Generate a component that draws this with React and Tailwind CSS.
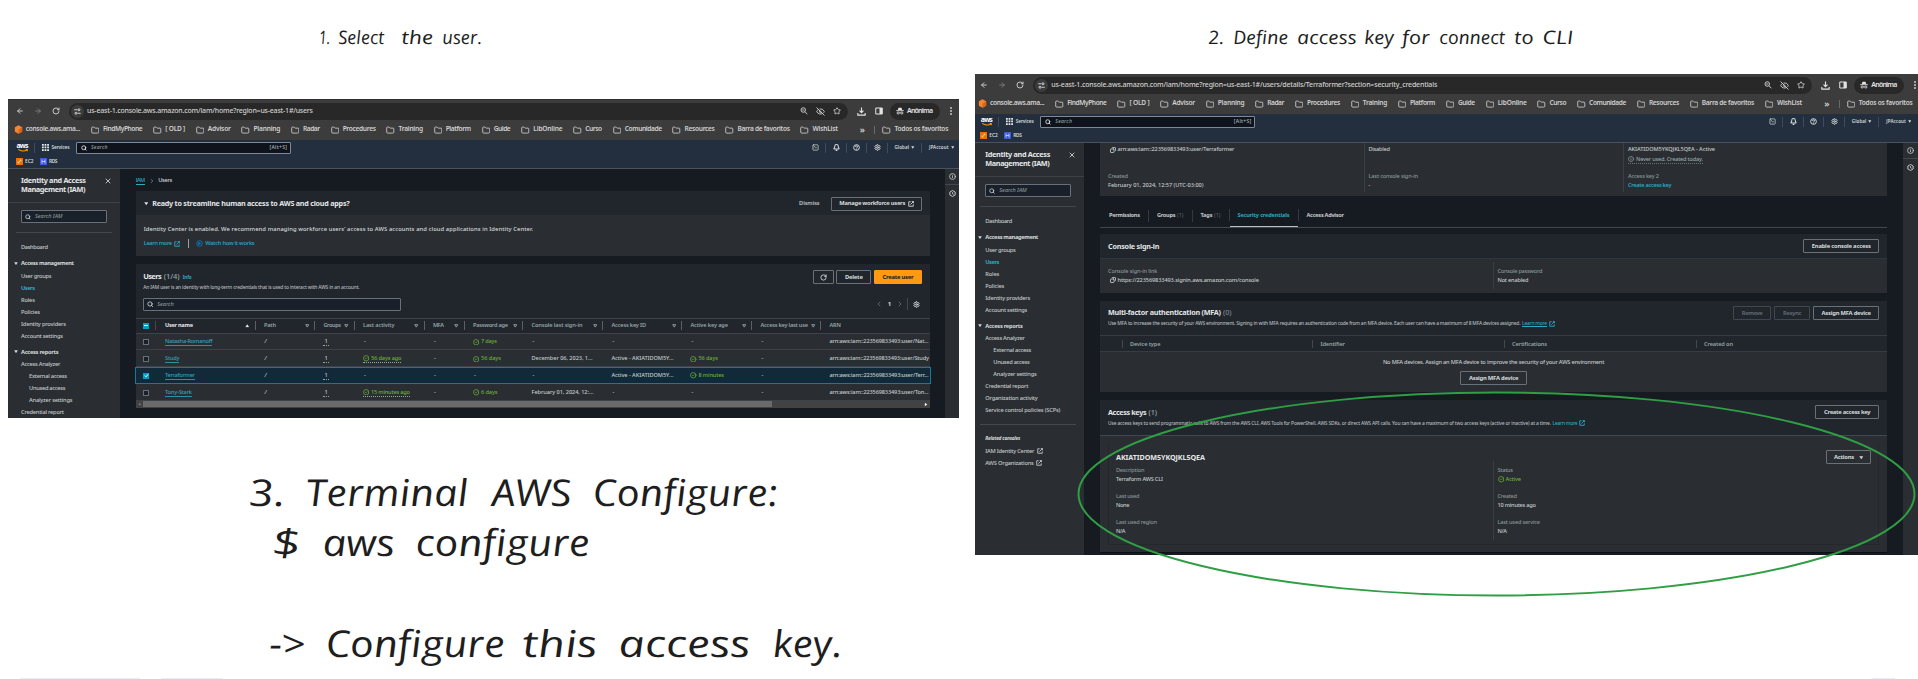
import { useLayoutEffect, useRef } from "react";
import {
  ArrowLeft, ArrowRight, RotateCw, Folder, Search, EyeOff, Star, Bell, Settings,
  Info, CircleCheck, X, Copy, ChevronLeft, ChevronRight, SquareTerminal,
} from "lucide-react";

/* Text run that is tracked so that it fills exactly `w` pixels. */
function T({ w, className = "", children }) {
  const ref = useRef(null);
  useLayoutEffect(() => {
    const el = ref.current;
    el.style.letterSpacing = "0px";
    const natural = el.getBoundingClientRect().width;
    const n = el.textContent.length;
    if (n > 1) el.style.letterSpacing = `${(w - natural) / (n - 1)}px`;
  }, [w, children]);
  return (
    <span className={"inline-block shrink-0 whitespace-pre " + className} style={{ width: w }}>
      <span ref={ref}>{children}</span>
    </span>
  );
}

/* Handwritten word, stretched to `w` pixels and set a little more upright than the italic. */
function Word({ w, gap, children }) {
  const ref = useRef(null);
  useLayoutEffect(() => {
    const el = ref.current;
    el.style.transform = "none";
    const natural = el.offsetWidth;
    el.style.transform = `scaleX(${w / natural}) skewX(6deg)`;
  }, [w, children]);
  return (
    <span className="inline-block shrink-0 whitespace-pre" style={{ width: w, marginLeft: gap }}>
      <span ref={ref} className="inline-block origin-left">{children}</span>
    </span>
  );
}

function Note({ words, className }) {
  return (
    <div className={"absolute flex font-['Virgil','Open_Sans',sans-serif] italic text-[#1e1e1e] " + className}>
      {words.map(([text, w, gap]) => (
        <Word key={text} w={w} gap={gap}>{text}</Word>
      ))}
    </div>
  );
}

function External({ className = "" }) {
  return (
    <svg viewBox="0 0 16 16" className={"shrink-0 " + className} fill="none" stroke="currentColor" strokeWidth="2.400">
      <path d="M7 2H2v12h12V9M10 1.500h4.500V6M14.500 1.500L6.500 9.500" />
    </svg>
  );
}

function Down({ className = "" }) {
  return (
    <svg viewBox="0 0 10 8" className={"shrink-0 " + className}>
      <path d="M0.500 0.500h9L5 7.500z" fill="currentColor" />
    </svg>
  );
}

function Sort() {
  return (
    <svg viewBox="0 0 10 9" className="h-[4px] w-[4.500px] shrink-0">
      <path d="M1.500 1.500h7L5 7z" fill="none" stroke="#95a5a6" strokeWidth="2" />
    </svg>
  );
}

function Incognito() {
  return (
    <svg viewBox="0 0 16 16" className="h-[8px] w-[8px] shrink-0" fill="#e3e3e3">
      <path d="M5 1.500h6l1.400 4.500H3.600z" />
      <path d="M0.500 6.500h15v1.700h-15z" />
      <circle cx="4.300" cy="12" r="2.200" fill="none" stroke="#e3e3e3" strokeWidth="1.600" />
      <circle cx="11.700" cy="12" r="2.200" fill="none" stroke="#e3e3e3" strokeWidth="1.600" />
      <path d="M6.500 11h3v1.400h-3z" />
    </svg>
  );
}

const bookmarks = [
  ["FindMyPhone", 39.8], ["[ OLD ]", 20], ["Advisor", 23], ["Planning", 27], ["Radar", 17],
  ["Procedures", 33.3], ["Training", 24.5], ["Platform", 25.5], ["Guide", 17], ["LibOnline", 29.3],
  ["Curso", 17], ["Comunidade", 37.2], ["Resources", 30.3], ["Barra de favoritos", 52.5], ["WishList", 25.3],
];

function FolderMark() {
  return <Folder className="h-[8.500px] w-[8.500px] shrink-0 text-[#cfcfcf]" strokeWidth={2.4} />;
}

function Chrome({ url, urlWidth }) {
  return (
    <div className="w-[951px] bg-[#3c3c3c] font-semibold text-[#d0d0d0]">
      <div className="flex h-[22px] items-center border-t border-[#303030] pt-[1px]">
        <ArrowLeft className="ml-[8px] h-[8px] w-[8px]" strokeWidth={2.8} />
        <ArrowRight className="ml-[9.500px] h-[8px] w-[8px] text-[#858585]" strokeWidth={2.4} />
        <RotateCw className="ml-[10px] h-[8px] w-[8px]" strokeWidth={2.8} />
        <div className="ml-[9px] flex h-[17px] w-[779px] items-center rounded-full bg-[#282828]">
          <div className="ml-[2.500px] flex h-[13px] w-[13px] items-center justify-center rounded-full bg-[#3c3c3c]">
            <svg viewBox="0 0 12 12" className="h-[7px] w-[7px]" fill="none" stroke="#e3e3e3" strokeWidth="1.500">
              <path d="M0.500 3h5M6.500 9h5" />
              <circle cx="8.500" cy="3" r="1.700" />
              <circle cx="3.500" cy="9" r="1.700" />
            </svg>
          </div>
          <T w={urlWidth} className="ml-[3px] text-[7px] font-medium">{url}</T>
          <div className="ml-auto mr-[7px] flex items-center gap-[8px]">
            <svg viewBox="0 0 16 16" className="h-[8px] w-[8px]" fill="none" stroke="#d6d6d6" strokeWidth="1.800">
              <circle cx="6.500" cy="6" r="4.500" />
              <path d="M10 9.500l4.500 5M4.500 6h4" />
            </svg>
            <EyeOff className="h-[9px] w-[9px]" strokeWidth={2.4} />
            <Star className="h-[8px] w-[8px]" strokeWidth={2.6} />
          </div>
        </div>
        <svg viewBox="0 0 16 16" className="ml-[9px] h-[9px] w-[9px]" fill="none" stroke="#e3e3e3" strokeWidth="2">
          <path d="M8 1v9M4.500 6.500L8 10l3.500-3.500M1.500 10.500v4h13v-4" />
        </svg>
        <svg viewBox="0 0 16 16" className="ml-[9px] h-[8px] w-[8px]">
          <path d="M1.500 2h13v12h-13z" fill="none" stroke="#e3e3e3" strokeWidth="2" />
          <path d="M9 2h5.500v12H9z" fill="#e3e3e3" />
        </svg>
        <div className="ml-[7.500px] flex h-[17px] w-[50px] items-center rounded-full bg-[#282828]">
          <span className="ml-[6px] mr-[3px] flex"><Incognito /></span>
          <T w={26} className="text-[7px] text-[#e3e3e3]">Anônima</T>
        </div>
        <svg viewBox="0 0 4 16" className="ml-[10px] h-[8px] w-[2px]" fill="#d6d6d6">
          <circle cx="2" cy="2" r="1.800" />
          <circle cx="2" cy="8" r="1.800" />
          <circle cx="2" cy="14" r="1.800" />
        </svg>
      </div>
      <div className="flex h-[19px] items-center pb-[1.500px] text-[6.600px] leading-none">
        <svg viewBox="0 0 16 16" className="ml-[6px] h-[9px] w-[9px] shrink-0">
          <path d="M8 0.500l6.500 3.700v7.600L8 15.500l-6.500-3.700V4.200z" fill="#f58536" />
          <path d="M8 8l6.500-3.800v7.600L8 15.500z" fill="#d86613" />
        </svg>
        <T w={54.6} className="ml-[2.700px]">console.aws.ama...</T>
        <div className="ml-[10.500px] flex items-center gap-[10.500px]">
          {bookmarks.map(([name, w]) => (
            <div key={name} className="flex items-center gap-[3.600px]">
              <FolderMark />
              <T w={w}>{name}</T>
            </div>
          ))}
        </div>
        <T w={6} className="ml-[22px] pb-[1.500px] text-[9px]">»</T>
        <div className="ml-[8.500px] h-[8px] w-px bg-[#6a6a6a]" />
        <div className="ml-[7px] flex items-center gap-[3.600px]">
          <FolderMark />
          <T w={54}>Todos os favoritos</T>
        </div>
      </div>
    </div>
  );
}

function Sep() {
  return <div className="h-[10px] w-px shrink-0 bg-[#3f4b5a]" />;
}

function AwsHeader({ className = "" }) {
  return (
    <div className="h-[29px] w-[951px] border-b border-[#4a535c] bg-[#232f3e] text-[#d5dbdb]">
      <div className={"flex h-[15px] items-center " + className}>
        <div className="ml-[8px] flex w-[13px] flex-col items-center">
          <T w={12} className="text-[7px] font-bold leading-[5px] text-white">aws</T>
          <svg viewBox="0 0 24 7" className="mt-[1px] h-[3px] w-[12px]" fill="none" stroke="#ff9900" strokeWidth="2.400">
            <path d="M1 1c6 5 15 5 20 1M18 1h4v4" />
          </svg>
        </div>
        <div className="ml-[5px]"><Sep /></div>
        <svg viewBox="0 0 14 14" className="ml-[7px] h-[7px] w-[7px]" fill="#e9ebed">
          <path d="M0 0h3.500v3.500H0zM5.200 0h3.500v3.500H5.200zM10.400 0h3.500v3.500h-3.500zM0 5.200h3.500v3.500H0zM5.200 5.200h3.500v3.500H5.200zM10.400 5.200h3.500v3.500h-3.500zM0 10.400h3.500v3.500H0zM5.200 10.400h3.500v3.500H5.200zM10.400 10.400h3.500v3.500h-3.500z" />
        </svg>
        <T w={18} className="ml-[2.500px] text-[4.800px] font-semibold">Services</T>
        <div className="ml-[6.500px] flex h-[12px] w-[214.500px] items-center rounded-[1px] border border-[#7d8998] bg-[#0f141c]">
          <Search className="ml-[4px] h-[6px] w-[6px] text-white" strokeWidth={3} />
          <T w={16.5} className="ml-[4px] text-[5px] italic text-[#95a5a6]">Search</T>
          <T w={17.5} className="ml-auto mr-[2.500px] text-[5.200px] text-[#aab7b8]">[Alt+S]</T>
        </div>
        <div className="ml-auto mr-[5px] flex items-center">
          <SquareTerminal className="mr-[6px] h-[7px] w-[7px]" strokeWidth={2.4} />
          <Sep />
          <Bell className="mx-[6.500px] h-[7px] w-[7px]" strokeWidth={3.5} />
          <Sep />
          <svg viewBox="0 0 16 16" className="mx-[6px] h-[7px] w-[7px]" fill="none" stroke="#e9ebed" strokeWidth="2">
            <circle cx="8" cy="8" r="6.500" />
            <path d="M5.500 6.500c0-3 5-3 5 0 0 1.500-2.500 1.500-2.500 3.500M8 11v1.800" />
          </svg>
          <Sep />
          <Settings className="mx-[6.500px] h-[7px] w-[7px]" strokeWidth={3.2} />
          <Sep />
          <T w={14.5} className="ml-[6.500px] text-[4.500px] font-semibold">Global</T>
          <Down className="ml-[2px] h-[3px] w-[3.500px]" />
          <div className="ml-[6.500px]"><Sep /></div>
          <T w={19.5} className="ml-[7px] text-[4.500px] font-semibold">JPAccout</T>
          <Down className="ml-[2px] h-[3px] w-[3.500px]" />
        </div>
      </div>
      <div className="flex h-[13px] items-center text-[4.800px] font-semibold">
        <div className="ml-[8px] flex h-[7px] w-[7px] items-center justify-center bg-[#ed7100]">
          <svg viewBox="0 0 10 10" className="h-[5px] w-[5px]" fill="none" stroke="#ffd9a8" strokeWidth="1.500">
            <path d="M2 8l6-6M5 2h3v3M2 5v3h3" />
          </svg>
        </div>
        <T w={8.5} className="ml-[2px]">EC2</T>
        <div className="ml-[6.500px] flex h-[7px] w-[7px] items-center justify-center bg-[#3b5bdb]">
          <svg viewBox="0 0 10 10" className="h-[5px] w-[5px]" fill="none" stroke="#dbe4ff" strokeWidth="1.500">
            <path d="M2 1v8M8 1v8M2 5h6" />
          </svg>
        </div>
        <T w={8.5} className="ml-[2px]">RDS</T>
      </div>
    </div>
  );
}

function NavItem({ w, active, indent, external, children }) {
  return (
    <div className={"flex h-[12px] items-center " + (indent ? "pl-[21px] " : "pl-[13px] ") + (active ? "font-bold text-[#2ea7c0]" : "text-[#c4caca]")}>
      <T w={w} className="text-[5.700px] leading-[8px]">{children}</T>
      {external && <External className="ml-[2.500px] h-[6px] w-[6px]" />}
    </div>
  );
}

function NavGroup({ w, children }) {
  return (
    <div className="flex h-[12px] items-center pl-[5.500px] font-bold text-[#d5dbdb]">
      <Down className="h-[3.500px] w-[4px]" />
      <T w={w} className="ml-[3.500px] text-[5.700px]">{children}</T>
    </div>
  );
}

function Sidebar({ full }) {
  return (
    <div className="w-[112px] shrink-0 overflow-hidden bg-[#2a2e33]">
      <div className="flex h-[34px] items-start justify-between border-b border-[#3d4248] pl-[13px] pr-[8px] pt-[7px] text-[7.300px] font-bold leading-[8.700px] text-[#e3e6e6]">
        <div className="flex flex-col">
          <T w={65}>Identity and Access</T>
          <T w={64.5}>Management (IAM)</T>
        </div>
        <X className="mt-[1px] h-[8px] w-[8px]" strokeWidth={2.4} />
      </div>
      <div className="ml-[13px] mt-[7px] flex h-[13px] w-[86px] items-center rounded-[1px] border border-[#687078] bg-[#1a2029]">
        <Search className="ml-[3px] h-[6px] w-[6px] text-[#d5dbdb]" strokeWidth={3} />
        <T w={27.5} className="ml-[4px] text-[5.500px] italic text-[#879596]">Search IAM</T>
      </div>
      <div className="mx-[8px] mt-[9px] h-px bg-[#43484e]" />
      <div className="mt-[7.500px]"><NavItem w={27}>Dashboard</NavItem></div>
      <div className="mt-[5px]">
        <NavGroup w={53}>Access management</NavGroup>
        <NavItem w={30.5}>User groups</NavItem>
        <NavItem w={14} active>Users</NavItem>
        <NavItem w={14}>Roles</NavItem>
        <NavItem w={19}>Policies</NavItem>
        <NavItem w={45}>Identity providers</NavItem>
        <NavItem w={42}>Account settings</NavItem>
      </div>
      <div className="mt-[4.500px]">
        <NavGroup w={37.5}>Access reports</NavGroup>
        <NavItem w={39.5}>Access Analyzer</NavItem>
        <NavItem w={38} indent>External access</NavItem>
        <NavItem w={36.5} indent>Unused access</NavItem>
        <NavItem w={43.5} indent>Analyzer settings</NavItem>
        <NavItem w={43}>Credential report</NavItem>
      </div>
      {full && (
        <>
          <NavItem w={52.5}>Organization activity</NavItem>
          <NavItem w={75}>Service control policies (SCPs)</NavItem>
          <div className="mx-[8px] mt-[8px] h-px bg-[#43484e]" />
          <div className="mt-[8px] flex h-[12px] items-center pl-[13px] font-bold italic text-[#d5dbdb]">
            <T w={35} className="text-[4.800px]">Related consoles</T>
          </div>
          <NavItem w={49} external>IAM Identity Center</NavItem>
          <NavItem w={48.5} external>AWS Organizations</NavItem>
        </>
      )}
    </div>
  );
}

function Rail() {
  return (
    <div className="flex w-[15px] shrink-0 flex-col items-center bg-[#2a2e33] text-[#d5dbdb]">
      <div className="flex h-[16px] w-full items-center justify-center border-b border-[#414750]">
        <Info className="h-[7px] w-[7px]" strokeWidth={2.6} />
      </div>
      <div className="flex h-[16px] items-center">
        <svg viewBox="0 0 16 16" className="h-[7px] w-[7px]" fill="none" stroke="currentColor" strokeWidth="2">
          <path d="M8 1.200l6 3.400v6.800l-6 3.400-6-3.400V4.600z" />
          <path d="M8 5v3.500l2.500 1.500" />
        </svg>
      </div>
    </div>
  );
}

function Button({ tone = "border-[#687078] text-[#d5dbdb]", className = "", children }) {
  return (
    <div className={"flex h-[14px] shrink-0 items-center justify-center rounded-[1px] border text-[5.800px] font-bold " + tone + " " + className}>
      {children}
    </div>
  );
}

function Ok({ w, dotted, children }) {
  return (
    <div className={"flex items-center gap-[1.500px] text-[#6aaf35] " + (dotted ? "border-b border-dotted border-[#95a5a6]" : "")}>
      <CircleCheck className="h-[6.500px] w-[6.500px] shrink-0" strokeWidth={2.8} />
      <T w={w}>{children}</T>
    </div>
  );
}

const columns = [
  ["Path", 12], ["Groups", 17.5], ["Last activity", 31.5], ["MFA", 11],
  ["Password age", 35], ["Console last sign-in", 51], ["Access key ID", 34.5],
  ["Active key age", 37.5], ["Access key last use", 47.5],
];

const users = [
  { name: "Natasha-Romanoff", w: 47.5, pass: ["7 days", 16], arn: "arn:aws:iam::223569833493:user/Nat...", arnW: 99 },
  { name: "Study", w: 14.5, act: ["56 days ago", 30.5], pass: ["56 days", 20], sign: ["December 06, 2023, 1...", 61], key: true, age: ["56 days", 19.5], arn: "arn:aws:iam::223569833493:user/Study", arnW: 99.5 },
  { name: "Terraformer", w: 30, selected: true, key: true, age: ["8 minutes", 25.5], arn: "arn:aws:iam::223569833493:user/Terr...", arnW: 99 },
  { name: "Tony-Stark", w: 27, act: ["15 minutes ago", 39], pass: ["6 days", 16.5], sign: ["February 01, 2024, 12:...", 62], arn: "arn:aws:iam::223569833493:user/Ton...", arnW: 99 },
];

const tableGrid = "grid grid-cols-[20.800px_99.500px_59.500px_39.500px_70px_40px_58.500px_80px_79px_70px_69px_1fr] items-center";

function Dash() {
  return <span className="pl-[1px]">-</span>;
}

function UserRow({ u }) {
  return (
    <div className={tableGrid + " h-[17px] pt-[1px] text-[5.600px] leading-[7px] text-[#c4caca] " + (u.selected ? "-mx-px border border-[#0d7d99] bg-[#12293a] pb-[1px]" : "border-b border-[#3d4248] bg-[#2a2e33]")}>
      {u.selected ? (
        <div className="ml-[7.500px] flex h-[6px] w-[6px] items-center justify-center bg-[#00a1c9]">
          <svg viewBox="0 0 10 10" className="h-[5px] w-[5px]" fill="none" stroke="#fff" strokeWidth="2"><path d="M1.500 5l2.500 2.500L8.500 2.500" /></svg>
        </div>
      ) : (
        <div className="ml-[7.500px] h-[6px] w-[6px] border border-[#687078] bg-[#1a2029]" />
      )}
      <div className="flex pl-[8.500px]"><T w={u.w} className="border-b border-[#2b8ea3] text-[#35a0b8]">{u.name}</T></div>
      <div className="pl-[8.500px] italic">/</div>
      <div className="flex pl-[8px]"><span className="border-b border-dotted border-[#95a5a6] px-[1px]">1</span></div>
      <div className="flex pl-[8px]">{u.act ? <Ok w={u.act[1]} dotted>{u.act[0]}</Ok> : <Dash />}</div>
      <div className="pl-[8px]"><Dash /></div>
      <div className="flex pl-[8px]">{u.pass ? <Ok w={u.pass[1]}>{u.pass[0]}</Ok> : <Dash />}</div>
      <div className="flex pl-[8px]">{u.sign ? <T w={u.sign[1]}>{u.sign[0]}</T> : <Dash />}</div>
      <div className="flex pl-[8px]">{u.key ? <T w={62}>Active - AKIATIDOM5Y...</T> : <Dash />}</div>
      <div className="flex pl-[8px]">{u.age ? <Ok w={u.age[1]}>{u.age[0]}</Ok> : <Dash />}</div>
      <div className="pl-[8px]"><Dash /></div>
      <div className="flex pl-[8px]"><T w={u.arnW}>{u.arn}</T></div>
    </div>
  );
}

function UsersPage() {
  return (
    <div className="flex min-w-0 flex-1 flex-col bg-[#161a21] px-[15.700px]">
      <div className="flex h-[22px] shrink-0 items-center pt-[1px] text-[5.600px] text-[#d5dbdb]">
        <T w={9.5} className="border-b border-[#2ea7c0] leading-[7px] text-[#2ea7c0]">IAM</T>
        <ChevronRight className="mx-[3.500px] h-[6px] w-[6px] text-[#879596]" strokeWidth={3} />
        <T w={14}>Users</T>
      </div>
      <section className="shrink-0 bg-[#2a2e33]">
        <div className="flex h-[25px] items-center border-b border-[#2a2e33] bg-[#21252c] pr-[7.500px] pt-[1px]">
          <Down className="ml-[8px] h-[3.500px] w-[4.500px] text-[#e3e6e6]" />
          <T w={197.5} className="ml-[4px] text-[7.200px] font-bold text-[#e3e6e6]">Ready to streamline human access to AWS and cloud apps?</T>
          <T w={20.5} className="ml-auto text-[5.600px] font-semibold text-[#c4caca]">Dismiss</T>
          <Button className="ml-[11.500px] w-[91px] gap-[2.500px]">
            <T w={66}>Manage workforce users</T>
            <External className="h-[6px] w-[6px]" />
          </Button>
        </div>
        <div className="flex h-[40px] flex-col pl-[8px] text-[5.800px]">
          <div className="mt-[6px] flex h-[14px] items-center text-[#d5dbdb]">
            <T w={389.5}>Identity Center is enabled. We recommend managing workforce users’ access to AWS accounts and cloud applications in Identity Center.</T>
          </div>
          <div className="flex h-[15px] items-center text-[#2ea7c0]">
            <T w={28.5}>Learn more</T>
            <External className="ml-[2px] h-[6px] w-[6px]" />
            <div className="ml-[8px] h-[9px] w-px bg-[#95a5a6]" />
            <svg viewBox="0 0 16 16" className="ml-[7px] h-[7px] w-[7px]" fill="none" stroke="#0b7fc2" strokeWidth="1.800">
              <circle cx="8" cy="8" r="6.500" />
              <path d="M6 5.500l4.500 2.500L6 10.500z" fill="#0b7fc2" />
            </svg>
            <T w={49.5} className="ml-[2px]">Watch how it works</T>
          </div>
        </div>
      </section>
      <section className="mt-[8px] flex h-[143.500px] shrink-0 flex-col bg-[#21252c]">
        <div className="flex h-[53.500px] shrink-0 justify-between">
          <div className="flex flex-col pl-[7.500px]">
            <div className="mt-[7px] flex h-[11px] items-center">
              <T w={18.5} className="text-[7.500px] font-bold text-[#e3e6e6]">Users</T>
              <T w={16} className="ml-[2px] text-[7.500px] text-[#95a5a6]">(1/4)</T>
              <T w={9} className="ml-[3px] pt-[2px] text-[4.600px] font-bold text-[#2ea7c0]">Info</T>
            </div>
            <div className="flex h-[11px] items-center">
              <T w={216.5} className="text-[4.900px] text-[#b4bcbc]">An IAM user is an identity with long-term credentials that is used to interact with AWS in an account.</T>
            </div>
            <div className="mt-[5px] flex h-[13px] w-[258px] items-center rounded-[1px] border border-[#687078] bg-[#1a2029]">
              <Search className="ml-[3px] h-[6.500px] w-[6.500px] text-[#d5dbdb]" strokeWidth={3} />
              <T w={16.5} className="ml-[3.500px] text-[5.500px] italic text-[#879596]">Search</T>
            </div>
          </div>
          <div className="flex flex-col items-end pr-[7.500px]">
            <div className="mt-[6px] flex gap-[2.700px]">
              <Button className="w-[20.500px]"><RotateCw className="h-[7px] w-[7px]" strokeWidth={3} /></Button>
              <Button className="w-[35px]"><T w={18}>Delete</T></Button>
              <Button tone="border-[#ff9912] bg-[#ff9912] text-[#16191f]" className="w-[48px]"><T w={31}>Create user</T></Button>
            </div>
            <div className="mt-[13px] flex h-[14px] items-center text-[#687078]">
              <ChevronLeft className="h-[8px] w-[8px]" strokeWidth={2.5} />
              <span className="mx-[5px] text-[6px] font-bold text-[#d5dbdb]">1</span>
              <ChevronRight className="h-[8px] w-[8px]" strokeWidth={2.5} />
              <div className="ml-[3px] h-[12px] w-px bg-[#43484e]" />
              <Settings className="ml-[5px] mr-[2px] h-[7px] w-[7px] text-[#d5dbdb]" strokeWidth={3.2} />
            </div>
          </div>
        </div>
        <div className={tableGrid + " h-[16px] shrink-0 border-y border-[#3d4248] text-[5.600px] font-semibold text-[#95a5a6]"}>
          <div className="flex h-[9px] items-center border-r border-[#43484e] pl-[7.500px]">
            <div className="flex h-[6px] w-[6px] items-center bg-[#00a1c9] px-[1px]"><div className="h-px w-full bg-white" /></div>
          </div>
          <div className="flex h-[9px] items-center justify-between border-r border-[#5a6068] pl-[8.500px] pr-[5px] text-[#e3e6e6]">
            <T w={28} className="font-bold">User name</T>
            <Down className="h-[3.500px] w-[4.500px] rotate-180" />
          </div>
          {columns.map(([name, w]) => (
            <div key={name} className="flex h-[9px] items-center justify-between border-r border-[#5a6068] pl-[8px] pr-[5px]">
              <T w={w}>{name}</T>
              <Sort />
            </div>
          ))}
          <div className="flex pl-[8px]"><T w={11.5}>ARN</T></div>
        </div>
        {users.map((u) => <UserRow key={u.name} u={u} />)}
        <div className="flex h-[6.500px] shrink-0 items-center bg-[#424242]">
          <Down className="ml-[2px] h-[2.500px] w-[3px] rotate-90 text-[#8a8a8a]" />
          <div className="ml-[2.500px] h-[6px] w-[629px] bg-[#6a6a6a]" />
          <Down className="ml-auto mr-[2px] h-[3px] w-[4px] -rotate-90 text-white" />
        </div>
      </section>
    </div>
  );
}

function Field({ label, lw, children, className = "" }) {
  return (
    <div className={"flex flex-col text-[5.600px] text-[#c4caca] " + className}>
      <div className="flex h-[9.500px] items-center"><T w={lw} className="text-[#879596]">{label}</T></div>
      <div className="flex h-[9.500px] items-center">{children}</div>
    </div>
  );
}

function TabSep() {
  return <div className="mx-[8px] h-[12px] w-px bg-[#353a42]" />;
}

function KeysPage() {
  return (
    <div className="flex min-w-0 flex-1 flex-col bg-[#161a21] px-[15.700px]">
      <section className="flex h-[53px] shrink-0 bg-[#2a2e33] text-[5.600px] text-[#c4caca]">
        <div className="flex w-[263.500px] flex-col pl-[8px]">
          <div className="flex h-[13px] items-center pl-[1.500px]">
            <Copy className="h-[6px] w-[6px] -scale-x-100" strokeWidth={3.4} />
            <T w={117} className="ml-[2px]">arn:aws:iam::223569833493:user/Terraformer</T>
          </div>
          <Field label="Created" lw={20} className="mt-[15px]"><T w={95.5}>February 01, 2024, 12:57 (UTC-03:00)</T></Field>
        </div>
        <div className="mb-[4px] flex w-[259.500px] flex-col border-l border-[#3a3f45] pl-[4px]">
          <div className="flex h-[13px] items-center"><T w={21.5}>Disabled</T></div>
          <Field label="Last console sign-in" lw={49.5} className="mt-[15px]">-</Field>
        </div>
        <div className="mb-[4px] flex flex-1 flex-col border-l border-[#3a3f45] pl-[4px]">
          <div className="flex h-[12px] items-center pt-[1px]"><T w={87}>AKIATIDOM5YKQJKL5QEA - Active</T></div>
          <div className="flex h-[8.500px] w-[75px] items-center border-b border-dotted border-[#687078] text-[#95a5a6]">
            <Info className="h-[6px] w-[6px]" strokeWidth={2.6} />
            <T w={67} className="ml-[2px]">Never used. Created today.</T>
          </div>
          <Field label="Access key 2" lw={31} className="mt-[7.500px]"><T w={43.5} className="font-semibold text-[#2ea7c0]">Create access key</T></Field>
        </div>
      </section>
      <div className="mt-[13px] flex h-[19px] shrink-0 items-start border-b border-[#414750] pl-[9px] text-[5.600px] font-bold text-[#c4caca]">
        <div className="flex h-[13px] items-center">
          <T w={31}>Permissions</T>
          <TabSep />
          <T w={18.5}>Groups</T>
          <T w={6.5} className="ml-[1.500px] font-normal text-[#5f6770]">(1)</T>
          <TabSep />
          <T w={12}>Tags</T>
          <T w={6.5} className="ml-[1.500px] font-normal text-[#5f6770]">(1)</T>
        </div>
        <div className="ml-[8px] h-[12px] w-px bg-[#353a42]" />
        <div className="flex h-[18px] items-start border-b border-[#b8bec4] pl-[8px] pr-[8px]">
          <div className="flex h-[13px] items-center"><T w={52} className="text-[#2ea7c0]">Security credentials</T></div>
        </div>
        <div className="h-[12px] w-px bg-[#353a42]" />
        <div className="ml-[8px] flex h-[13px] items-center"><T w={37.5}>Access Advisor</T></div>
      </div>
      <section className="mt-[6px] shrink-0 bg-[#2a2e33]">
        <div className="flex h-[25px] items-center justify-between border-b border-[#30353b] bg-[#21252c] px-[8px]">
          <T w={51.5} className="text-[7.200px] font-bold text-[#e3e6e6]">Console sign-in</T>
          <Button className="w-[76px]"><T w={59}>Enable console access</T></Button>
        </div>
        <div className="flex h-[33.700px] pb-[4px] pt-[3px]">
          <div className="w-[393.500px] border-r border-[#3a3f45] pl-[8px] pt-[4px]">
            <Field label="Console sign-in link" lw={49.5}>
              <Copy className="ml-[1.500px] h-[6px] w-[6px] -scale-x-100" strokeWidth={3.4} />
              <T w={141.5} className="ml-[2px]">https://223569833493.signin.aws.amazon.com/console</T>
            </Field>
          </div>
          <div className="pl-[4px] pt-[4px]">
            <Field label="Console password" lw={45}><T w={31}>Not enabled</T></Field>
          </div>
        </div>
      </section>
      <section className="mt-[8.300px] h-[91px] shrink-0 bg-[#2a2e33]">
        <div className="flex h-[34.500px] justify-between bg-[#21252c] px-[8px] pt-[5px]">
          <div>
            <div className="flex h-[13px] items-center text-[7.200px]">
              <T w={113} className="font-bold text-[#e3e6e6]">Multi-factor authentication (MFA)</T>
              <T w={8.5} className="ml-[2px] text-[#7d878c]">(0)</T>
            </div>
            <div className="flex h-[10px] items-center text-[4.900px] text-[#b4bcbc]">
              <T w={412.5}>Use MFA to increase the security of your AWS environment. Signing in with MFA requires an authentication code from an MFA device. Each user can have a maximum of 8 MFA devices assigned.</T>
              <T w={25} className="ml-[1.500px] border-b border-[#2ea7c0] leading-[6px] text-[#2ea7c0]">Learn more</T>
              <External className="ml-[1.500px] h-[6px] w-[6px] text-[#2ea7c0]" />
            </div>
          </div>
          <div className="flex gap-[3px]">
            <Button tone="border-[#414750] text-[#5f6770]" className="w-[38px]"><T w={21}>Remove</T></Button>
            <Button tone="border-[#414750] text-[#5f6770]" className="w-[36px]"><T w={18.5}>Resync</T></Button>
            <Button className="w-[66px]"><T w={49.5}>Assign MFA device</T></Button>
          </div>
        </div>
        <div className="grid h-[16.500px] grid-cols-[21.500px_190.500px_191.500px_192px_1fr] items-center border-y border-[#363b44] bg-[#21252c] text-[5.600px] font-semibold text-[#95a5a6]">
          <div />
          <div className="flex h-[8px] items-center border-l border-[#43484e] pl-[7.500px]"><T w={30.5}>Device type</T></div>
          <div className="flex h-[8px] items-center border-l border-[#43484e] pl-[7.500px]"><T w={24.5}>Identifier</T></div>
          <div className="flex h-[8px] items-center border-l border-[#43484e] pl-[7.500px]"><T w={35}>Certifications</T></div>
          <div className="flex h-[8px] items-center border-l border-[#43484e] pl-[7.500px]"><T w={29}>Created on</T></div>
        </div>
        <div className="flex flex-col items-center pt-[4px]">
          <div className="flex h-[12px] items-center text-[5.700px] text-[#c4caca]"><T w={221.5}>No MFA devices. Assign an MFA device to improve the security of your AWS environment</T></div>
          <Button className="mt-[3.500px] w-[67px]"><T w={49.5}>Assign MFA device</T></Button>
        </div>
      </section>
      <section className="mt-[8px] h-[153px] shrink-0 border-b border-[#0d1117] bg-[#2a2e33]">
        <div className="flex h-[36px] justify-between border-b border-[#414750] bg-[#21252c] px-[8px] pt-[5.500px]">
          <div>
            <div className="flex h-[13px] items-center text-[7.200px]">
              <T w={38.5} className="font-bold text-[#e3e6e6]">Access keys</T>
              <T w={8.5} className="ml-[2px] text-[#95a5a6]">(1)</T>
            </div>
            <div className="flex h-[10px] items-center text-[4.900px] text-[#b4bcbc]">
              <T w={443}>Use access keys to send programmatic calls to AWS from the AWS CLI, AWS Tools for PowerShell, AWS SDKs, or direct AWS API calls. You can have a maximum of two access keys (active or inactive) at a time.</T>
              <T w={25} className="ml-[1.500px] text-[#2ea7c0]">Learn more</T>
              <External className="ml-[1.500px] h-[6px] w-[6px] text-[#2ea7c0]" />
            </div>
          </div>
          <Button className="w-[64px]"><T w={46.5}>Create access key</T></Button>
        </div>
        <div className="mx-[8px] mt-[7px] h-[102px] border border-t-0 border-[#24282d] px-[7px] pt-[7.500px]">
          <div className="flex h-[14px] items-center justify-between">
            <T w={89} className="text-[7.200px] font-bold text-[#e3e6e6]">AKIATIDOM5YKQJKL5QEA</T>
            <Button className="w-[45.500px] gap-[4.500px]"><T w={20}>Actions</T><Down className="h-[3.500px] w-[4.500px]" /></Button>
          </div>
          <div className="-mt-[3px] flex h-[79px]">
            <div className="flex w-[377.500px] flex-col gap-[7px] border-r border-[#3a3f45] pt-[3.700px]">
              <Field label="Description" lw={28.5}><T w={47}>Terraform AWS CLI</T></Field>
              <Field label="Last used" lw={23.5}><T w={13.5}>None</T></Field>
              <Field label="Last used region" lw={41}><T w={9.5}>N/A</T></Field>
            </div>
            <div className="flex flex-col gap-[7px] pl-[4px] pt-[3.700px]">
              <Field label="Status" lw={15.5}><Ok w={15.5}>Active</Ok></Field>
              <Field label="Created" lw={19.5}><T w={38.5}>10 minutes ago</T></Field>
              <Field label="Last used service" lw={42.5}><T w={9.5}>N/A</T></Field>
            </div>
          </div>
        </div>
      </section>
    </div>
  );
}

export default function App() {
  return (
    <div className="relative h-[679px] w-[1918px] overflow-hidden bg-white font-['Noto_Sans','Open_Sans',sans-serif] font-medium">
      <Note className="left-[319px] top-[24px] text-[18.500px] leading-[26px]" words={[["1.", 11, 0], ["Select", 46, 8], ["the", 32, 17], ["user.", 40, 9]]} />
      <Note className="left-[1208px] top-[24px] text-[18.500px] leading-[26px]" words={[["2.", 16, 0], ["Define", 55, 9], ["access", 59, 9], ["key", 30, 8], ["for", 28, 8], ["connect", 66, 9], ["to", 20, 9], ["CLI", 31, 8]]} />
      <Note className="left-[248px] top-[467px] text-[37px] leading-[50px]" words={[["3.", 37, 0], ["Terminal", 163, 20], ["AWS", 80, 23], ["Configure:", 186, 21]]} />
      <Note className="left-[271px] top-[517px] text-[37px] leading-[50px]" words={[["$", 29, 0], ["aws", 72, 22], ["configure", 174, 21]]} />
      <Note className="left-[269px] top-[618px] text-[37px] leading-[50px]" words={[["->", 36, 0], ["Configure", 179, 20], ["this", 75, 18], ["access", 132, 21], ["key.", 70, 22]]} />

      <div className="absolute left-[8px] top-[99px] h-[318.500px] w-[951px] overflow-hidden">
        <Chrome url="us-east-1.console.aws.amazon.com/iam/home?region=us-east-1#/users" urlWidth={226} />
        <AwsHeader />
        <div className="flex h-[249px] w-[952.300px]">
          <Sidebar />
          <UsersPage />
          <Rail />
        </div>
      </div>

      <div className="absolute left-[975px] top-[74px] h-[480.500px] w-[943px] overflow-hidden">
        <div className="-ml-[2.700px] -mt-[1px] w-[945.700px]">
          <Chrome url="us-east-1.console.aws.amazon.com/iam/home?region=us-east-1#/users/details/Terraformer?section=security_credentials" urlWidth={386} />
          <AwsHeader className="w-[944px]" />
          <div className="flex h-[412px]">
            <Sidebar full />
            <KeysPage />
            <Rail />
          </div>
        </div>
      </div>

      <svg className="absolute left-[1074px] top-[389px] h-[210px] w-[844px]" viewBox="0 0 844 210" fill="none">
        <ellipse cx="422.500" cy="105" rx="418" ry="101.500" stroke="#2f9e44" strokeWidth="2" />
      </svg>

      <div className="absolute left-[18px] top-[677.500px] h-[8px] w-[124px] rounded-[8px] bg-[#ececf4]" />
      <div className="absolute left-[160px] top-[677.500px] h-[8px] w-[64px] rounded-[8px] bg-[#ececf4]" />
      <div className="absolute left-[1870px] top-[677.500px] h-[8px] w-[27px] rounded-[8px] bg-[#ececf4]" />
    </div>
  );
}
